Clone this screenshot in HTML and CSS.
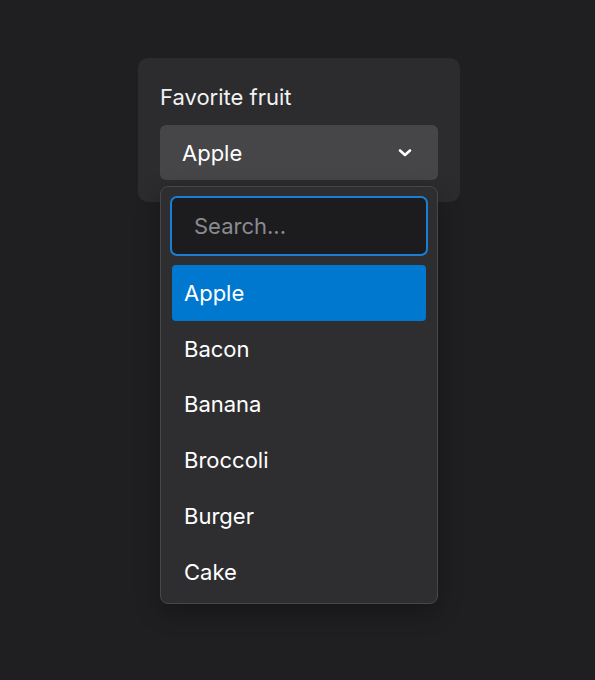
FILE: index.html
```html
<!DOCTYPE html>
<html>
<head>
<meta charset="utf-8">
<link rel="stylesheet" href="styles.css">
</head>
<body>
<div class="card">
  <div class="label">Favorite fruit</div>
  <div class="select-wrap">
    <div class="select">
      <span class="value">Apple</span>
      <svg class="chevron" width="14" height="10" viewBox="0 0 14 10"><path d="M2 2.5 L7 7 L12 2.5" fill="none" stroke="#ffffff" stroke-width="2.6" stroke-linecap="round" stroke-linejoin="round"/></svg>
    </div>
    <div class="dropdown">
      <div class="search">Search...</div>
      <ul class="list">
        <li class="item selected">Apple</li>
        <li class="item">Bacon</li>
        <li class="item">Banana</li>
        <li class="item">Broccoli</li>
        <li class="item">Burger</li>
        <li class="item">Cake</li>
      </ul>
    </div>
  </div>
</div>
</body>
</html>
```
FILE: styles.css
```css
html, body {
  margin: 0;
  padding: 0;
  background: #1f1f21;
  height: 100%;
}
body {
  font-family: "Inter", "Noto Sans", sans-serif;
  color: #ffffff;
  padding-top: 58px;
  padding-left: 138px;
  box-sizing: border-box;
}
.card {
  width: 322px;
  box-sizing: border-box;
  background: #2c2c2e;
  border-radius: 10px;
  padding: 25px 22px 22px 22px;
}
.label {
  font-size: 22px;
  line-height: 28px;
  margin-bottom: 14px;
  color: #f2f2f2;
}
.select-wrap {
  position: relative;
}
.select {
  height: 55px;
  box-sizing: border-box;
  background: #464648;
  border-radius: 6px;
  display: flex;
  align-items: center;
  justify-content: space-between;
  padding: 0 26px 0 22px;
  font-size: 22px;
}
.chevron {
  display: block;
}
.dropdown {
  position: absolute;
  top: calc(100% + 6px);
  left: 0;
  right: 0;
  background: #2e2e30;
  border: 1px solid #47474a;
  border-radius: 8px;
  padding: 9px 9px 3px 9px;
  box-shadow: 0 8px 24px rgba(0, 0, 0, 0.3);
}
.search {
  height: 60px;
  box-sizing: border-box;
  background: #1c1c1e;
  border: 2px solid #1a7fd4;
  border-radius: 7px;
  display: flex;
  align-items: center;
  padding-left: 22px;
  font-size: 22px;
  color: #8a8b90;
}
.list {
  list-style: none;
  margin: 9px 0 0 0;
  padding: 0 2px;
}
.item {
  height: 55.8px;
  display: flex;
  align-items: center;
  padding-left: 12px;
  font-size: 22px;
  border-radius: 4px;
  color: #ffffff;
}
.item.selected {
  background: #0078d0;
}
```
